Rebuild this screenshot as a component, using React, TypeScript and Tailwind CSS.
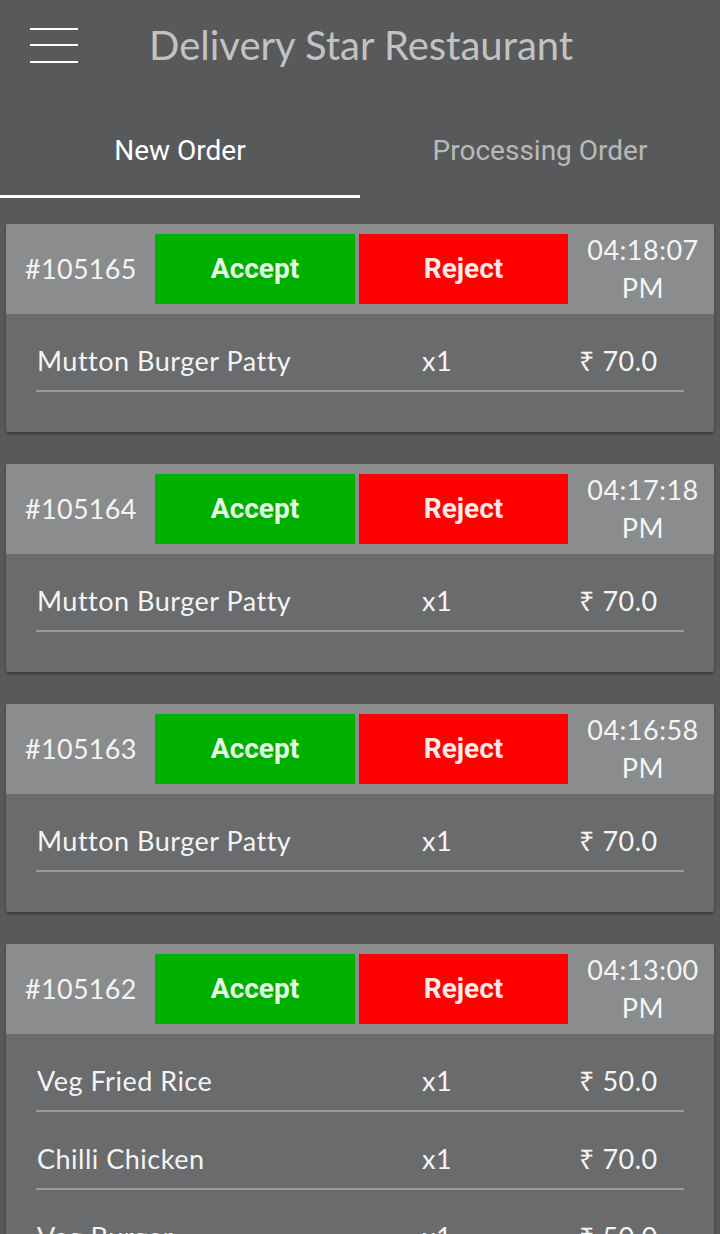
import React from "react";

type Item = { name: string; qty: number; price: string };
type Order = { id: string; time: string; items: Item[] };

const orders: Order[] = [
  { id: "#105165", time: "04:18:07", items: [{ name: "Mutton Burger Patty", qty: 1, price: "70.0" }] },
  { id: "#105164", time: "04:17:18", items: [{ name: "Mutton Burger Patty", qty: 1, price: "70.0" }] },
  { id: "#105163", time: "04:16:58", items: [{ name: "Mutton Burger Patty", qty: 1, price: "70.0" }] },
  {
    id: "#105162",
    time: "04:13:00",
    items: [
      { name: "Veg Fried Rice", qty: 1, price: "50.0" },
      { name: "Chilli Chicken", qty: 1, price: "70.0" },
      { name: "Veg Burger", qty: 1, price: "50.0" },
    ],
  },
];

function OrderCard({ order }: { order: Order }) {
  return (
    <div className="mx-[6px] mb-[32px] rounded-[2px] bg-[#6a6b6d] shadow-[0_2px_3px_rgba(0,0,0,0.35)] overflow-hidden">
      <div className="flex h-[90px] bg-[#8b8c8e]">
        <div className="w-[149px] flex items-center pl-[19px] text-[27px] tracking-[0.3px] text-[#f4f4f4] font-['Lato','Noto_Sans',sans-serif]">
          {order.id}
        </div>
        <div className="flex pt-[10px] pb-[10px] gap-[4px]">
          <button className="w-[200px] h-[70px] bg-[#00b000] text-[28px] font-bold text-[#e6f6e6] font-['Roboto',sans-serif]">
            Accept
          </button>
          <button className="w-[209px] h-[70px] bg-[#ff0000] text-[28px] font-bold text-[#fbe8e8] font-['Roboto',sans-serif]">
            Reject
          </button>
        </div>
        <div className="flex-1 flex flex-col items-center justify-center text-[27px] tracking-[0.5px] leading-[38px] text-[#f4f4f4] font-['Lato','Noto_Sans',sans-serif] pl-[4px]">
          <span>{order.time}</span>
          <span>PM</span>
        </div>
      </div>
      <div className="pb-[40px]">
        {order.items.map((it, i) => (
          <div key={i} className="mx-[30px] h-[78px] border-b-2 border-[#9a9b9d] flex items-start pt-[33px] text-[27px] tracking-[0.5px] leading-[28px] text-[#f4f4f4] font-['Lato','Noto_Sans',sans-serif]">
            <span className="w-[386px] pl-[1px]">{it.name}</span>
            <span className="w-[157px]">x{it.qty}</span>
            <span className="whitespace-nowrap">
              <span className="font-['Noto_Sans',sans-serif]">₹</span> {it.price}
            </span>
          </div>
        ))}
      </div>
    </div>
  );
}

export default function App() {
  return (
    <div className="min-h-screen w-[720px] bg-[#58595b] overflow-hidden">
      <div className="h-[92px] flex items-center">
        <div className="ml-[30px] w-[48px] flex flex-col gap-[14.5px] -mt-[2px]">
          <div className="h-[2px] bg-white" />
          <div className="h-[2px] bg-white" />
          <div className="h-[2px] bg-white" />
        </div>
        <div className="ml-[71px] -mt-[2px] text-[40px] text-[#c2c2c2] font-['Lato','Noto_Sans',sans-serif]">
          Delivery Star Restaurant
        </div>
      </div>
      <div className="flex">
        <div className="w-[360px] flex flex-col">
          <div className="h-[103px] flex items-center justify-center pt-[15px] text-[28px] text-white font-['Roboto',sans-serif]">
            New Order
          </div>
          <div className="h-[3px] bg-white" />
        </div>
        <div className="w-[360px] flex flex-col">
          <div className="h-[103px] flex items-center justify-center pt-[15px] text-[28px] text-[#b9b9b9] font-['Roboto',sans-serif]">
            Processing Order
          </div>
        </div>
      </div>
      <div className="mt-[26px]">
        {orders.map((o) => (
          <OrderCard key={o.id} order={o} />
        ))}
      </div>
    </div>
  );
}
